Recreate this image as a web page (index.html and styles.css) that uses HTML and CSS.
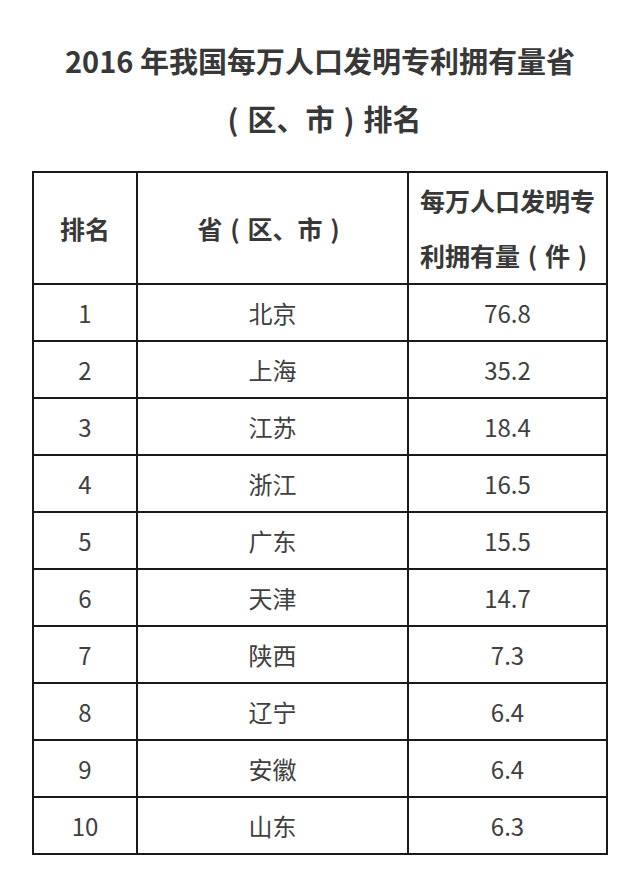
FILE: index.html
```html
<!DOCTYPE html>
<html lang="zh-CN">
<head>
<meta charset="utf-8">
<link rel="stylesheet" href="styles.css">
</head>
<body>
<div class="page">
  <h1 class="title">2016 年我国每万人口发明专利拥有量省<br><span class="p">(</span>区、市<span class="p">)</span>排名</h1>
  <table class="rank">
    <colgroup>
      <col class="c1">
      <col class="c2">
      <col class="c3">
    </colgroup>
    <thead>
      <tr class="head">
        <th>排名</th>
        <th>省<span class="p">(</span>区、市<span class="p">)</span></th>
        <th>每万人口发明专<br>利拥有量<span class="p">(</span>件<span class="p">)</span></th>
      </tr>
    </thead>
    <tbody>
      <tr><td>1</td><td>北京</td><td>76.8</td></tr>
      <tr><td>2</td><td>上海</td><td>35.2</td></tr>
      <tr><td>3</td><td>江苏</td><td>18.4</td></tr>
      <tr><td>4</td><td>浙江</td><td>16.5</td></tr>
      <tr><td>5</td><td>广东</td><td>15.5</td></tr>
      <tr><td>6</td><td>天津</td><td>14.7</td></tr>
      <tr><td>7</td><td>陕西</td><td>7.3</td></tr>
      <tr><td>8</td><td>辽宁</td><td>6.4</td></tr>
      <tr><td>9</td><td>安徽</td><td>6.4</td></tr>
      <tr><td>10</td><td>山东</td><td>6.3</td></tr>
    </tbody>
  </table>
</div>
</body>
</html>
```
FILE: styles.css
```css
html, body {
  margin: 0;
  padding: 0;
  background: #ffffff;
}
body {
  font-family: "Noto Sans CJK SC", "Noto Sans", sans-serif;
  color: #333333;
}
.page {
  width: 640px;
  padding-top: 31px;
}
.title {
  margin: 0;
  text-align: center;
  font-size: 29px;
  line-height: 58px;
  font-weight: 700;
  color: #383838;
}
.p {
  display: inline-block;
  width: 1em;
  text-align: center;
}
.rank {
  margin: 24px 0 0 32px;
  width: 574px;
  border-collapse: collapse;
  table-layout: fixed;
}
.c1 { width: 104px; }
.c2 { width: 271px; }
.c3 { width: 199px; }
.rank th, .rank td {
  border: 2px solid #1a1a1a;
  text-align: center;
  padding: 0;
  font-size: 24px;
  color: #404040;
}
.rank th {
  font-weight: 700;
  font-size: 25px;
  line-height: 55px;
  height: 110px;
  color: #383838;
}
.rank td {
  height: 55px;
  font-weight: 400;
}
```
